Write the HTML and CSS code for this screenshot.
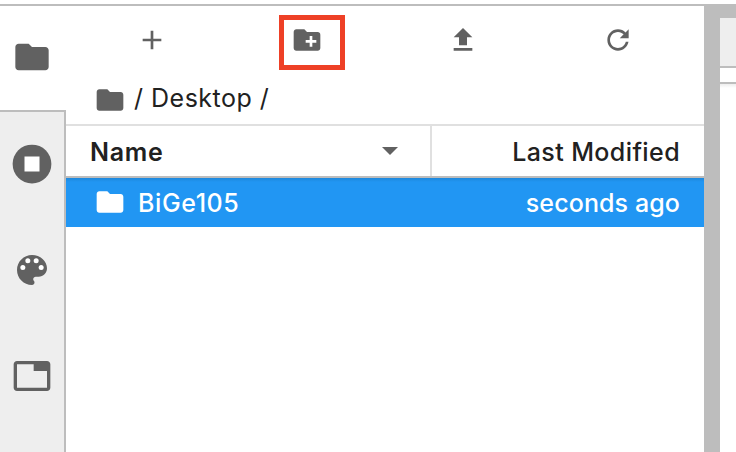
FILE: index.html
```html
<!DOCTYPE html>
<html lang="en">
<head>
<meta charset="utf-8">
<title>File browser</title>
<link rel="stylesheet" href="styles.css">
</head>
<body>
<div class="shell">
  <nav class="sidebar">
    <div class="tab tab-active">
      <svg class="icon-lg" viewBox="0 0 24 24"><path d="M10 4H4c-1.1 0-1.99.9-1.99 2L2 18c0 1.1.9 2 2 2h16c1.1 0 2-.9 2-2V8c0-1.1-.9-2-2-2h-8l-2-2z"/></svg>
    </div>
    <div class="tabs-rest">
      <div class="tab"><svg class="icon-lg" viewBox="0 0 512 512"><circle cx="256" cy="256" r="248"/><rect class="inverse" x="160" y="160" width="192" height="192"/></svg></div>
      <div class="tab"><svg class="icon-lg" viewBox="0 0 24 24"><path d="M12 3c-4.97 0-9 4.03-9 9s4.03 9 9 9c.83 0 1.5-.67 1.5-1.5 0-.39-.15-.74-.39-1.01-.23-.26-.38-.61-.38-.99 0-.83.67-1.5 1.5-1.5H16c2.76 0 5-2.24 5-5 0-4.42-4.03-8-9-8z"/><g class="inverse"><circle cx="6.5" cy="10.5" r="1.5"/><circle cx="9.5" cy="6.5" r="1.5"/><circle cx="14.5" cy="6.5" r="1.5"/><circle cx="17.5" cy="10.5" r="1.5"/></g></svg></div>
      <div class="tab"><svg class="icon-lg" viewBox="0 0 24 24"><path d="M21 3H3c-1.1 0-2 .9-2 2v14c0 1.1.9 2 2 2h18c1.1 0 2-.9 2-2V5c0-1.1-.9-2-2-2zm0 16H3V5h10v4h8v10z"/></svg></div>
    </div>
  </nav>
  <main class="browser">
    <div class="toolbar">
      <div class="tool"><svg class="icon" viewBox="0 0 24 24"><path d="M19 13h-6v6h-2v-6H5v-2h6V5h2v6h6v2z"/></svg></div>
      <div class="tool"><svg class="icon" viewBox="0 0 24 24"><path d="M20 6h-8l-2-2H4c-1.11 0-1.99.89-1.99 2L2 18c0 1.11.89 2 2 2h16c1.11 0 2-.89 2-2V8c0-1.11-.89-2-2-2zm-1 8h-3v3h-2v-3h-3v-2h3V9h2v3h3v2z"/></svg><span class="highlight"></span></div>
      <div class="tool"><svg class="icon" viewBox="0 0 24 24"><path d="M9 16h6v-6h4l-7-7-7 7h4zm-4 2h14v2H5z"/></svg></div>
      <div class="tool"><svg class="icon" viewBox="0 0 18 18"><path d="M9 13.5c-2.49 0-4.5-2.01-4.5-4.5S6.51 4.5 9 4.5c1.24 0 2.36.52 3.17 1.33L10 8h5V3l-1.76 1.76C12.15 3.68 10.66 3 9 3 5.69 3 3.01 5.69 3.01 9S5.69 15 9 15c2.97 0 5.43-2.16 5.9-5h-1.52c-.46 2-2.24 3.5-4.38 3.5z"/></svg></div>
    </div>
    <div class="crumbs">
      <svg class="icon" viewBox="0 0 24 24"><path d="M10 4H4c-1.1 0-1.99.9-1.99 2L2 18c0 1.1.9 2 2 2h16c1.1 0 2-.9 2-2V8c0-1.1-.9-2-2-2h-8l-2-2z"/></svg>
      <span class="crumb-text">/ Desktop /</span>
    </div>
    <div class="header">
      <div class="col-name"><span class="name-label">Name</span><svg class="caret" viewBox="0 0 16 8"><path d="M0 0h16L8 8z"/></svg></div>
      <div class="col-modified"><span class="modified-label">Last Modified</span></div>
    </div>
    <div class="row">
      <svg class="icon" viewBox="0 0 24 24"><path d="M10 4H4c-1.1 0-1.99.9-1.99 2L2 18c0 1.1.9 2 2 2h16c1.1 0 2-.9 2-2V8c0-1.1-.9-2-2-2h-8l-2-2z"/></svg>
      <span class="file-name">BiGe105</span>
      <span class="file-time">seconds ago</span>
    </div>
  </main>
  <div class="splitter"></div>
  <section class="dock">
    <div class="dock-tabs"></div>
    <div class="dock-toolbar"></div>
    <div class="dock-body"></div>
  </section>
</div>
</body>
</html>
```
FILE: styles.css
```css
* { box-sizing: border-box; }
body {
  margin: 0;
  padding-top: 4px;
  height: 452px;
  overflow: hidden;
  background: #fff;
  color: #212121;
  font: 25px/30px Inter, "Liberation Sans", sans-serif;
  white-space: nowrap;
}
svg { display: block; flex: none; fill: #616161; }
.inverse { fill: #fff; }
.shell { display: flex; height: 448px; border-top: 2px solid #bdbdbd; }
.icon { width: 32px; height: 32px; }
.icon-lg { width: 40px; height: 40px; }
.sidebar { display: flex; flex-direction: column; width: 66px; }
.tab { display: flex; flex: none; align-items: center; justify-content: center; height: 106px; width: 64px; padding-bottom: 2px; }
.tab-active { height: 104px; }
.tabs-rest { flex: 1; background: #eee; border: solid #bdbdbd; border-width: 2px 2px 0 0; }
.browser { width: 638px; }
.toolbar { display: flex; height: 68px; padding: 0 8px; }
.tool { position: relative; flex: 1; display: flex; justify-content: center; padding-top: 18px; }
.highlight { position: absolute; left: 50%; top: 9px; width: 66px; height: 55px; margin-left: -28px; border: 5px solid #ee4026; }
.crumbs { display: flex; align-items: center; height: 50px; padding: 2px 0 0 28px; }
.crumb-text { margin: -5px 0 0 8px; letter-spacing: 0.5px; }
.header { display: flex; height: 54px; border-top: 2px solid #e0e0e0; border-bottom: 2px solid #bdbdbd; font-weight: 500; }
.col-name { display: flex; align-items: center; justify-content: space-between; width: 366px; padding: 2px 32px 0 24px; border-right: 2px solid #e0e0e0; }
.name-label { font-weight: 600; letter-spacing: 0.7px; }
.caret { width: 16px; height: 8px; margin-top: -3px; }
.col-modified { flex: 1; display: flex; align-items: center; justify-content: flex-end; padding: 2px 24px 0 0; }
.modified-label { letter-spacing: 0.4px; }
.row { display: flex; align-items: center; height: 49px; padding: 0 24px 0 28px; background: linear-gradient(#1e88db, #2196f3 4px); color: #fff; font-weight: 500; }
.row svg { margin-top: -2px; fill: #fff; }
.file-name { margin-left: 12px; letter-spacing: 0.6px; }
.file-time { margin-left: auto; letter-spacing: 0.1px; }
.splitter { width: 16px; background: #bdbdbd; }
.dock { flex: 1; display: flex; flex-direction: column; }
.dock-tabs { height: 62px; border-top: 12px solid #bdbdbd; border-bottom: 2px solid #bdbdbd; background: #eee; }
.dock-toolbar { height: 16px; border-bottom: 2px solid #bdbdbd; }
.dock-body { flex: 1; background: linear-gradient(#eee, #fff 4px); }
```
